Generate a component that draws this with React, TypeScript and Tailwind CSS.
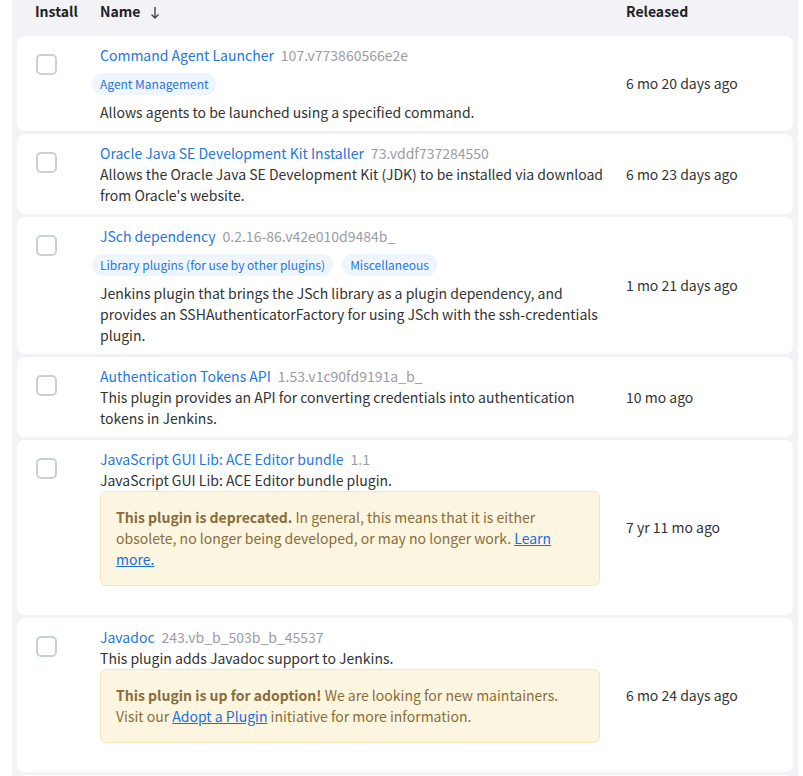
import React from 'react';

type Plugin = {
  name: string;
  version: string;
  tags?: string[];
  description: string;
  released: string;
  notice?: 'deprecated' | 'adoption';
};

const plugins: Plugin[] = [
  {
    name: 'Command Agent Launcher',
    version: '107.v773860566e2e',
    tags: ['Agent Management'],
    description: 'Allows agents to be launched using a specified command.',
    released: '6 mo 20 days ago',
  },
  {
    name: 'Oracle Java SE Development Kit Installer',
    version: '73.vddf737284550',
    description: "Allows the Oracle Java SE Development Kit (JDK) to be installed via download from Oracle's website.",
    released: '6 mo 23 days ago',
  },
  {
    name: 'JSch dependency',
    version: '0.2.16-86.v42e010d9484b_',
    tags: ['Library plugins (for use by other plugins)', 'Miscellaneous'],
    description:
      'Jenkins plugin that brings the JSch library as a plugin dependency, and provides an SSHAuthenticatorFactory for using JSch with the ssh-credentials plugin.',
    released: '1 mo 21 days ago',
  },
  {
    name: 'Authentication Tokens API',
    version: '1.53.v1c90fd9191a_b_',
    description: 'This plugin provides an API for converting credentials into authentication tokens in Jenkins.',
    released: '10 mo ago',
  },
  {
    name: 'JavaScript GUI Lib: ACE Editor bundle',
    version: '1.1',
    description: 'JavaScript GUI Lib: ACE Editor bundle plugin.',
    released: '7 yr 11 mo ago',
    notice: 'deprecated',
  },
  {
    name: 'Javadoc',
    version: '243.vb_b_503b_b_45537',
    description: 'This plugin adds Javadoc support to Jenkins.',
    released: '6 mo 24 days ago',
    notice: 'adoption',
  },
];

const Notice = ({ kind }: { kind: 'deprecated' | 'adoption' }) => (
  <div className="mb-[21px] w-[500px] rounded-[6px] border border-[#f6e6b8] bg-[#fcf5e0] px-[15px] py-[15px] text-[#8a6d3b]">
    {kind === 'deprecated' ? (
      <p>
        <b className="font-bold">This plugin is deprecated.</b> In general, this means that it is either obsolete, no
        longer being developed, or may no longer work.{' '}
        <a href="#" className="text-[#1a6fe0] underline">
          Learn more.
        </a>
      </p>
    ) : (
      <p>
        <b className="font-bold">This plugin is up for adoption!</b> We are looking for new maintainers. Visit our{' '}
        <a href="#" className="text-[#1a6fe0] underline">
          Adopt a Plugin
        </a>{' '}
        initiative for more information.
      </p>
    )}
  </div>
);

export default function App() {
  return (
    <div
      className="min-h-[776px] bg-white pl-[12px] pr-[5px] text-[14px] leading-[21px] text-[#333]"
      style={{ fontFamily: '"Noto Sans CJK KR", "Noto Sans", sans-serif' }}
    >
      <div className="bg-[#f2f2f7] px-[5px] pb-[3px]">
        {/* header */}
        <div className="flex h-[36px] pt-[1px] font-semibold text-[#222]">
          <div className="w-[83px] pl-[18px]">Install</div>
          <div className="flex w-[526px] items-start gap-[10px]">
            <span>Name</span>
            <svg width="10" height="14" viewBox="0 0 10 14" className="mt-[5px]" fill="none" stroke="#444" strokeWidth="1.4">
              <path d="M5 1v11M1.5 8.5 5 12l3.5-3.5" />
            </svg>
          </div>
          <div>Released</div>
        </div>

        {/* rows */}
        <div className="flex flex-col gap-[3px]">
          {plugins.map((p) => (
            <div key={p.name} className="flex rounded-[8px] bg-white">
              <div className="w-[83px] shrink-0 pl-[19px] pt-[18px]">
                <div className="h-[21px] w-[21px] rounded-[5px] border-2 border-[#c9d1d6] bg-white" />
              </div>
              <div className="w-[510px] shrink-0 pb-[8px] pt-[9px]">
                <div>
                  <a href="#" className="text-[#2477e0]">
                    {p.name}
                  </a>
                  <span className="ml-[7px] text-[#9b9ba3]">{p.version}</span>
                </div>
                {p.tags && (
                  <div className="-ml-[8px] my-[7px] flex gap-[9px]">
                    {p.tags.map((t) => (
                      <span key={t} className="rounded-full bg-[#eff5fd] px-[8px] text-[12px] leading-[22px] text-[#2477e0]">
                        {t}
                      </span>
                    ))}
                  </div>
                )}
                <p>{p.description}</p>
                {p.notice && <Notice kind={p.notice} />}
              </div>
              <div className="flex items-center pl-[16px]">{p.released}</div>
            </div>
          ))}
          <div className="h-[10px] rounded-t-[8px] bg-white" />
        </div>
      </div>
    </div>
  );
}
